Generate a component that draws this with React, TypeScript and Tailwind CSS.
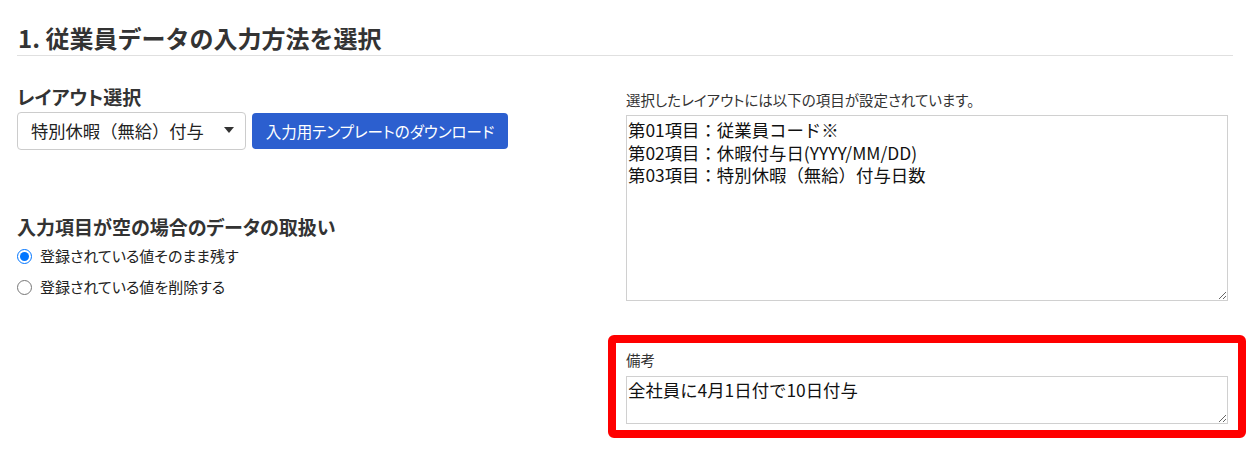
import React from "react";

export default function App() {
  const font = "[font-family:'Noto_Sans_CJK_JP','Noto_Sans',sans-serif]";
  return (
    <div className={`w-[1256px] h-[453px] bg-white text-[#333] ${font} overflow-hidden`}>
      <div className="pl-[17px] pr-[23px]">
        <div className="pt-[22px] pb-[1px] border-b border-[#e0e0e0]">
          <h2 className="text-[24px] leading-[32px] font-bold pl-[1px] text-[#333]">
            1. 従業員データの入力方法を選択
          </h2>
        </div>
        <div className="flex">
          {/* Left column */}
          <div className="w-[609px] shrink-0 pt-[29px]">
            <div className="text-[19px] leading-[24px] font-bold [font-feature-settings:'palt']">
              レイアウト選択
            </div>
            <div className="flex items-start gap-[6px] mt-[3px]">
              <div className="w-[229px] h-[38px] border border-[#cccccc] rounded-[4px] bg-white flex items-center justify-between pl-[13px] pr-[11px]">
                <span className="text-[17.3px] leading-[22px] text-[#222]">特別休暇（無給）付与</span>
                <svg width="10" height="6" viewBox="0 0 10 6" className="mb-[2px]">
                  <path d="M0 0 L10 0 L5 6 Z" fill="#333" />
                </svg>
              </div>
              <button className="mt-[1px] w-[256px] h-[36px] rounded-[4px] bg-[#2c5fcf] text-white text-[15.5px] leading-[22px] [font-feature-settings:'palt'] flex items-center justify-center">
                入力用テンプレートのダウンロード
              </button>
            </div>
            <div className="mt-[65px] text-[19px] leading-[24px] font-bold [font-feature-settings:'palt']">
              入力項目が空の場合のデータの取扱い
            </div>
            <div className="mt-[9px] flex flex-col gap-[15px] text-[15px] leading-[16px] text-[#222] [font-feature-settings:'palt']">
              <label className="flex items-center gap-[8px]">
                <input type="radio" name="empty" defaultChecked className="m-0 w-[15px] h-[15px]" />
                <span>登録されている値そのまま残す</span>
              </label>
              <label className="flex items-center gap-[8px]">
                <input type="radio" name="empty" className="m-0 w-[15px] h-[15px]" />
                <span>登録されている値を削除する</span>
              </label>
            </div>
          </div>
          {/* Right column */}
          <div className="flex-1 pt-[33px] pr-[5px]">
            <div className="text-[14.5px] leading-[21px] text-[#333] [font-feature-settings:'palt']">
              選択したレイアウトには以下の項目が設定されています。
            </div>
            <textarea
              readOnly
              className="mt-[5px] block w-full h-[186px] border border-[#d0d0d0] px-[1px] py-[3px] text-[17.4px] leading-[22.5px] text-[#111] bg-white outline-none resize-y"
              defaultValue={"第01項目：従業員コード※\n第02項目：休暇付与日(YYYY/MM/DD)\n第03項目：特別休暇（無給）付与日数"}
            />
            <div className="mt-[34px] -mx-[18px] border-[8px] border-[#ff0000] rounded-[6px] px-[10px] pt-[7px] pb-[6px]">
              <div className="text-[14.5px] leading-[20px] text-[#333]">備考</div>
              <textarea
                readOnly
                className="mt-[6px] block w-full h-[48px] border border-[#d0d0d0] px-[1px] py-[2px] text-[17.4px] leading-[22.5px] text-[#111] bg-white outline-none resize-y"
                defaultValue={"全社員に4月1日付で10日付与"}
              />
            </div>
          </div>
        </div>
      </div>
    </div>
  );
}
